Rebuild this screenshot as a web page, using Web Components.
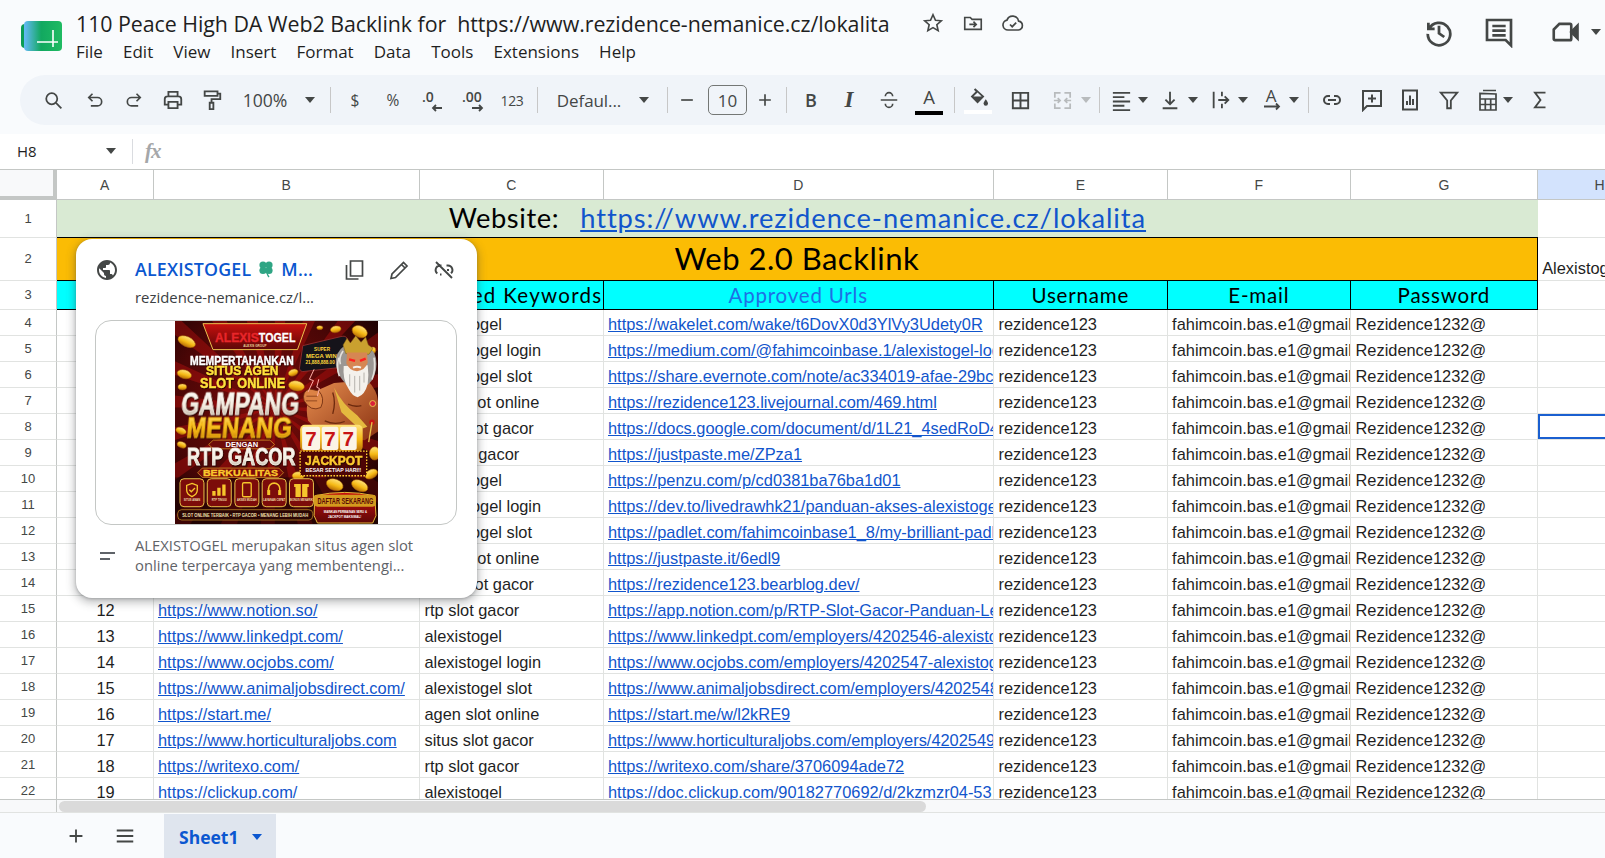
<!DOCTYPE html>
<html lang="en">
<head>
<meta charset="utf-8">
<title>110 Peace High DA Web2 Backlink</title>
<style>
  html, body { margin: 0; height: 858px; overflow: hidden; background: #f9fbfd; }
</style>
</head>
<body>
<sheet-app></sheet-app>
<script>
const UI_FONT = '"Open Sans", "Liberation Sans", sans-serif';
const CELL_FONT = '"Liberation Sans", Arial, sans-serif';
const HEAD_FONT = 'Lato, "Open Sans", sans-serif';

// stroke icon on a 24 unit box
function icon(d, size = 22, width = 2, color = '#444746') {
  return `<svg width="${size}" height="${size}" viewBox="0 0 24 24" fill="none" stroke="${color}" stroke-width="${width}" style="display:block">${d}</svg>`;
}
const p = (d) => `<path d="${d}"/>`;
const caret = (color = '#444746') => `<svg width="12" height="7" viewBox="0 0 12 7" style="display:block"><path d="M1 0h10L6 6z" fill="${color}"/></svg>`;

class DocHeader extends HTMLElement {
  constructor() {
    super();
    this.attachShadow({ mode: 'open' });
    const menus = ['File', 'Edit', 'View', 'Insert', 'Format', 'Data', 'Tools', 'Extensions', 'Help'];
    this.shadowRoot.innerHTML = `
      <style>
        :host { display: flex; height: 75px; font-family: ${UI_FONT}; color: #1f1f1f; }
        .logo { margin: 21px 14px 0 21px; width: 41px; height: 30px; flex: none; }
        .main { flex: none; width: 1010px; }
        .title { display: flex; align-items: center; height: 34px; margin-top: 6px; }
        .title span { font-size: 21.4px; letter-spacing: -0.06px; white-space: pre; width: 837px; flex: none; }
        .title i { width: 40px; flex: none; display: flex; justify-content: center; }
        .menu { display: flex; gap: 20.1px; font-size: 17px; height: 24px; align-items: center; margin-top: -1px; }
        .right { display: flex; align-items: center; margin-left: 338px; height: 64px; flex: none; }
        .right b { display: block; font-weight: normal; }
      </style>
      <svg class="logo" viewBox="0 0 41 30">
        <defs><linearGradient id="g" x1="0" x2="1"><stop offset="0.02" stop-color="#62b9f2"/><stop offset="0.45" stop-color="#12a860"/><stop offset="1" stop-color="#1fbb62"/></linearGradient></defs>
        <rect x="0" y="3" width="10" height="24" rx="4" fill="#0b9c55"/>
        <rect x="3" y="0" width="38" height="30" rx="4" fill="url(#g)"/>
        <path d="M16 21h21M32 9v17" stroke="#fff" stroke-width="1.6" fill="none"/>
      </svg>
      <div class="main">
        <div class="title">
          <span>110 Peace High DA Web2 Backlink for  https://www.rezidence-nemanice.cz/lokalita</span>
          <i>${icon('<path d="M12 3l2.7 6 6.3.6-4.8 4.3 1.4 6.4L12 17l-5.6 3.3 1.4-6.4L3 9.6 9.3 9z"/>', 22, 1.8)}</i>
          <i>${icon(p('M3 6h6l2 2h10v11H3z M8 13.5h7 M12.5 10.5l3 3-3 3'), 22, 1.8)}</i>
          <i>${icon(p('M7 19a5 5 0 0 1-1-9.9 6 6 0 0 1 11.6 1A4.5 4.5 0 0 1 17.5 19z M9 13.5l2.2 2.2 4-4'), 24, 1.7)}</i>
        </div>
        <div class="menu">${menus.map((m) => `<span>${m}</span>`).join('')}</div>
      </div>
      <div class="right">
        <b>${icon(p('M3.5 4.5v5h5 M4 9.5a9 9 0 1 1-1 4 M12 7v6l4.2 3'), 30, 2.2)}</b>
        <b style="margin-left:29px">${icon(p('M3 3h18v19l-4-4H3z M7 7.5h10 M7 11h10 M7 14.5h10'), 32, 2)}</b>
        <b style="margin-left:35px">${icon('<path d="M3 10l4.5-4.5H16a1 1 0 0 1 1 1v11a1 1 0 0 1-1 1H4a1 1 0 0 1-1-1z"/><path d="M17 12l5-5v10z" fill="#444746"/>', 30, 2.1)}</b>
        <b style="margin-left:10px">${caret()}</b>
      </div>
    `;
  }
}
customElements.define('doc-header', DocHeader);

class ToolBtn extends HTMLElement {
  constructor() {
    super();
    this.attachShadow({ mode: 'open' });
    this.shadowRoot.innerHTML = `
      <style>
        :host { display: flex; flex: none; align-items: center; justify-content: center; height: 50px; white-space: nowrap; color: #444746; }
      </style>
      <slot></slot>
    `;
  }
}
customElements.define('tool-btn', ToolBtn);

class SheetToolbar extends HTMLElement {
  constructor() {
    super();
    this.attachShadow({ mode: 'open' });
    const t = (s, size, w = '') => `<span style="font-size:${size}px;${w}">${s}</span>`;
    const sep = [1, '<div class="sep"></div>'];
    const gray = '#b8bbbd';
    // centre x in the window, width, content
    const items = [
      [53.5, 24, icon('<circle cx="10" cy="10" r="6.3"/>' + p('M14.8 14.8L21 21'), 21)],
      [95, 24, icon(p('M9 4.5L4.5 9 9 13.5 M4.5 9H15a5 5 0 0 1 0 10H7'), 20)],
      [134, 24, icon(p('M15 4.5L19.5 9 15 13.5 M19.5 9H9a5 5 0 0 0 0 10h8'), 20)],
      [172.5, 24, icon(p('M7 8V3.2h10V8 M6.5 17H3v-6a3 3 0 0 1 3-3h12a3 3 0 0 1 3 3v6h-3.5 M7 14h10v6.8H7z'), 22)],
      [212, 24, icon(p('M4 2.5h14v5H4z M18 5h3v6H11.5v3.5 M9.5 15h4v7h-4z'), 22)],
      [265, 50, t('100%', 17.6)],
      [310, 14, caret()],
      [330.5, ...sep],
      [355, 14, t('$', 15.5)],
      [393, 18, t('%', 15.5)],
      [431, 28, `<svg width="28" height="28" viewBox="0 0 28 28" overflow="visible" style="display:block" fill="#444746"><text x="5" y="16" font-size="14" font-weight="600" font-family='${UI_FONT}'>.0</text><path d="M25 22H16 M19 19l-3 3 3 3" stroke="#444746" stroke-width="1.8" fill="none"/></svg>`],
      [472, 30, `<svg width="30" height="28" viewBox="0 0 30 28" overflow="visible" style="display:block" fill="#444746"><text x="5" y="16" font-size="14" font-weight="600" font-family='${UI_FONT}'>.00</text><path d="M15 22h10 M22 19l3 3-3 3" stroke="#444746" stroke-width="1.8" fill="none"/></svg>`],
      [512, 30, t('123', 14, 'letter-spacing:-.4px')],
      [537, ...sep],
      [589, 68, t('Defaul...', 17, 'letter-spacing:-.1px')],
      [644, 14, caret()],
      [667, ...sep],
      [687, 20, icon(p('M5 12h14'), 22)],
      [727.5, 40, '<div class="size">10</div>'],
      [765, 20, icon(p('M5 12h14 M12 5v14'), 22)],
      [786, ...sep],
      [811, 16, `<b style="font-size:18px;font-weight:600;font-family:${UI_FONT}">B</b>`],
      [849, 16, `<i style="font-size:23px;font-weight:700;font-family:'Liberation Serif',serif;">I</i>`],
      [889, 24, icon('<path d="M3 12h18 M8 8a4 4 0 0 1 8 0 M8 16a4 4 0 0 0 8 0"/>', 22, 1.8)],
      [929, 28, '<div class="color"><span>A</span><em style="background:#000"></em></div>'],
      [954.5, ...sep],
      [978, 28, `<div class="color"><svg width="22" height="22" viewBox="0 0 24 24" style="display:block"><path d="M9 2l-1.5 1.5 2 2-5.5 5.5 7.5 7.5 7.5-7.5z M7 11l4.5-4.5 4.5 4.5z" fill="#444746" fill-rule="evenodd"/><path d="M20.5 14s-2.4 3-2.4 4.6a2.4 2.4 0 0 0 4.8 0c0-1.6-2.4-4.6-2.4-4.6z" fill="#444746"/></svg><em style="background:#fff"></em></div>`],
      [1020, 24, icon(p('M4 4h16v16H4z M12 4v16 M4 12h16'), 23)],
      [1062, 24, icon(p('M4 9V4h6 M14 4h6v5 M4 15v5h6 M14 20h6v-5 M3 12h6 M7 9.5L9.5 12 7 14.5 M21 12h-6 M17 9.5L14.5 12 17 14.5'), 23, 1.8, gray)],
      [1086, 14, caret(gray)],
      [1099, ...sep],
      [1121, 24, icon(p('M3 4h18 M3 8.5h12 M3 13h18 M3 17.5h12 M3 22h18'), 23)],
      [1143, 14, caret()],
      [1170, 24, icon(p('M12 3v13 M7 11.5l5 5 5-5 M4 21h16'), 22)],
      [1193, 14, caret()],
      [1221, 24, icon(p('M4 3v18 M13 3v5 M13 16v5 M9 12h11 M16 8l4 4-4 4'), 22)],
      [1243, 14, caret()],
      [1272, 24, `<svg width="24" height="26" viewBox="0 0 24 26" overflow="visible" style="display:block"><text x="11" y="15" text-anchor="middle" font-size="17" font-family='${UI_FONT}' fill="#444746">A</text><path d="M4 19.5h15 M16 16.5l3 3-3 3" fill="none" stroke="#444746" stroke-width="1.8"/></svg>`],
      [1294, 14, caret()],
      [1308, ...sep],
      [1332, 24, icon(p('M10 8H8a4 4 0 0 0 0 8h2 M14 8h2a4 4 0 0 1 0 8h-2 M8 12h8'), 24)],
      [1372, 24, icon(p('M3 3h18v15H7l-4 4z M12 6.5v8 M8 10.5h8'), 24)],
      [1410, 24, icon(p('M5 2.5h14v19H5z M9 17v-4 M12 17V7.5 M15 17v-6'), 24)],
      [1449, 24, icon(p('M3 4h18l-7 8.5V21h-4v-8.5z'), 22)],
      [1488, 24, icon(p('M7 2.5h13 M4 5.5v16.5h16V6z M4 11h16 M9.3 11v11 M14.7 11v11 M4 16.5h16'), 24, 1.7)],
      [1508, 14, caret()],
      [1540, 24, icon(p('M18 4H6.5l6 8-6 8H18'), 22)],
    ];
    let right = 20;
    const html = items.map(([c, w, body]) => {
      const left = c - w / 2;
      const gap = left - right;
      right = left + w;
      return `<tool-btn style="width:${w}px;margin-left:${gap}px">${body}</tool-btn>`;
    }).join('');
    this.shadowRoot.innerHTML = `
      <style>
        :host { display: flex; height: 50px; margin-left: 20px; background: #f0f4f9; border-radius: 25px 0 0 25px; font-family: ${UI_FONT}; align-items: center; }
        .sep { width: 1px; height: 26px; background: #c7c7c7; }
        .size { width: 39px; height: 30px; box-sizing: border-box; border: 1px solid #747775; border-radius: 5px; display: flex; align-items: center; justify-content: center; font-size: 17px; color: #444746; }
        .color { display: flex; flex-direction: column; align-items: center; width: 28px; }
        .color span { font-size: 18.5px; line-height: 22px; color: #444746; height: 25px; }
        .color svg { height: 25px; margin-top: -1px; }
        em { display: block; width: 28px; height: 4px; }
      </style>
      ${html}
    `;
  }
}
customElements.define('sheet-toolbar', SheetToolbar);

class FormulaBar extends HTMLElement {
  constructor() {
    super();
    this.attachShadow({ mode: 'open' });
    this.shadowRoot.innerHTML = `
      <style>
        :host { display: flex; height: 35px; margin-top: 9px; background: #fff; align-items: center; font-family: ${UI_FONT}; color: #1f1f1f; }
        .name { font-size: 15px; margin: -2px 0 0 17px; width: 88px; }
        .sep { width: 1px; height: 25px; background: #dadce0; margin-left: 15px; }
        .fx { font-family: "Liberation Serif", serif; font-style: italic; font-size: 21px; color: #a5a7a9; margin-left: 12px; font-weight: 700; letter-spacing: -1px; }
      </style>
      <span class="name">H8</span>${caret()}<span class="sep"></span><span class="fx">fx</span>
    `;
  }
}
customElements.define('formula-bar', FormulaBar);

class PromoArt extends HTMLElement {
  constructor() {
    super();
    this.attachShadow({ mode: 'open' });
    const coins = [[35, 62, 28, 15, 25], [28, 160, 22, 13, 15], [22, 198, 13, 9, 0], [365, 195, 24, 15, 10], [355, 155, 15, 10, -20], [18, 330, 16, 10, 20], [20, 372, 14, 9, 20], [370, 465, 18, 12, 0], [600, 398, 16, 20, 0], [590, 460, 20, 13, -30], [480, 492, 26, 17, 20], [555, 495, 26, 16, 25], [483, 25, 16, 10, -10], [555, 32, 24, 17, 25], [595, 88, 8, 10, 0], [435, 20, 9, 6, 0]];
    const tiles = [15, 97, 180, 262, 344];
    const rays = [];
    for (let a = 0; a < 360; a += 18) {
      const r = a * Math.PI / 180;
      rays.push(`<path d="M300 260L${300 + 500 * Math.cos(r)} ${260 + 500 * Math.sin(r)}L${300 + 500 * Math.cos(r + .12)} ${260 + 500 * Math.sin(r + .12)}z" fill="#c8120f" opacity=".38"/>`);
    }
    const txt = (s, x, y, w, size, fill, extra = '') => `<text x="${x}" y="${y}" textLength="${w}" lengthAdjust="spacingAndGlyphs" font-size="${size}" font-weight="900" fill="${fill}" font-family='"Liberation Sans",sans-serif' ${extra}>${s}</text>`;
    const fat = (color, n = 2.5) => `stroke="${color}" stroke-width="${n}" class="sh"`;
    this.shadowRoot.innerHTML = `
      <style>
        :host { display: block; width: 203px; height: 203px; flex: none; }
        svg { display: block; width: 100%; height: 100%; }
        .sh { filter: drop-shadow(2px 3px 1px rgba(30,5,0,.85)); }
      </style>
      <svg viewBox="0 0 610 610">
        <defs>
          <radialGradient id="bg" cx=".45" cy=".42" r=".7"><stop offset="0" stop-color="#7c0c0a"/><stop offset=".65" stop-color="#4a0606"/><stop offset="1" stop-color="#1c0303"/></radialGradient>
          <linearGradient id="gold" x1="0" x2="0" y1="0" y2="1"><stop offset="0" stop-color="#ffe27a"/><stop offset=".55" stop-color="#f5b915"/><stop offset="1" stop-color="#b86d06"/></linearGradient>
          <linearGradient id="white" x1="0" x2="0" y1="0" y2="1"><stop offset="0" stop-color="#fff"/><stop offset=".6" stop-color="#f3ece0"/><stop offset="1" stop-color="#a89a88"/></linearGradient>
          <linearGradient id="skin" x1="0" x2="1" y1="0" y2="1"><stop offset="0" stop-color="#e88f50"/><stop offset="1" stop-color="#8a3212"/></linearGradient>
          <linearGradient id="band" x1="0" x2="0" y1="0" y2="1"><stop offset="0" stop-color="#c8100e"/><stop offset="1" stop-color="#5d0707"/></linearGradient>
        </defs>
        <rect width="610" height="610" fill="url(#bg)"/>
        ${rays.join('')}
        <rect x="0" y="470" width="610" height="140" fill="#220404" opacity=".55"/>
        <g fill="url(#gold)" stroke="#a65f05" stroke-width="1.5">${coins.map(([x, y, a, b, r]) => `<ellipse cx="${x}" cy="${y}" rx="${a}" ry="${b}" transform="rotate(${r} ${x} ${y})"/>`).join('')}</g>

        <path d="M84 8H396L368 86H114z" fill="url(#band)" stroke="#eec24e" stroke-width="3"/>
        ${txt('ALEXIS', 120, 62, 132, 40, '#e8262a', 'stroke="#e8262a" stroke-width="1"')}${txt('TOGEL', 252, 62, 110, 40, '#fff', 'stroke="#fff" stroke-width="1"')}
        ${txt('ALEXIS GROUP', 205, 78, 70, 9, '#e9d39a')}

        <!-- phone -->
        <path d="M384 74l118-28q14-2 16 10l-6 82-128 14q-10 0-10-10z" fill="#15131a" stroke="#8a2a2a" stroke-width="3"/>
        ${txt('SUPER', 418, 90, 48, 15, '#ffd83a')}${txt('MEGA WIN', 394, 110, 92, 18, '#ffd83a')}${txt('21,888,888.00', 392, 130, 88, 14, '#ffd83a')}

        <!-- the old god -->
        <path d="M400 300q-14-60 20-88l58-26 100-8q30 30 32 64v90l-40 26-130-16z" fill="url(#skin)"/>
        <path d="M474 215q10 30 0 64M520 250q20 10 40 4M450 300q30 14 60 2" fill="none" stroke="#6d2a0e" stroke-width="4"/>
        <path d="M388 240q-8-28 16-36l28 6q20 22 6 50-30 14-50-20z" fill="#dc8244" stroke="#6d2a0e" stroke-width="2.5"/>
        <path d="M395 226h32M393 240h34" stroke="#6d2a0e" stroke-width="2"/>
        <path d="M478 200q24 50 70 84l30 34-22 8-56-52z" fill="#e4b93f"/>
        <path d="M488 150q-14-40 10-66 26-26 62-18 36 10 44 46 6 36-12 66-20 26-46 26-38-6-58-54z" fill="#9b9794"/>
        <path d="M492 110q-8 30 2 56M598 110q6 34-6 66M505 90q-14 20-8 40" fill="none" stroke="#e4e1dc" stroke-width="5"/>
        <path d="M507 135q-4 40 14 68 12 24 28 26 22-8 30-40 4-26 0-56z" fill="#f4f1ec"/>
        <path d="M525 160v36M540 165v50M555 165v44M568 155v30" stroke="#a9a5a0" stroke-width="2.5"/>
        <path d="M505 72l12-20 10 14 16-22 16 20 14-16 8 24 14 10-12 18-70-2z" fill="#caa02f" stroke="#7c5a12" stroke-width="1.5"/>
        <path d="M517 95h60l2 30q-8 24-32 26-24-2-32-24z" fill="#d68653"/>
        <path d="M523 115l18 5M573 113l-17 7" stroke="#ff1f1f" stroke-width="7"/>
        <path d="M535 140q12-5 24 0" stroke="#f4f1ec" stroke-width="6" fill="none"/>
        <circle cx="594" cy="248" r="9" fill="#d9213a" stroke="#e8c14a" stroke-width="3"/>
        <path d="M418 145l-14 30 12 4-16 34M432 175l-6 24 8 4-6 22" fill="none" stroke="#ffb0a8" stroke-width="3"/>

        <rect x="376" y="312" width="188" height="80" rx="14" fill="url(#gold)"/>
        <g fill="#fbf4e6"><rect x="382" y="318" width="54" height="70" rx="6"/><rect x="441" y="318" width="50" height="70" rx="6"/><rect x="496" y="318" width="50" height="70" rx="6"/></g>
        <g font-size="62" font-weight="900" fill="#c71414" font-family='"Liberation Sans",sans-serif' text-anchor="middle"><text x="409" y="376">7</text><text x="466" y="376">7</text><text x="521" y="376">7</text></g>
        <circle cx="592" cy="304" r="8" fill="#c71414"/><path d="M592 304l-10 60" stroke="#e8c14a" stroke-width="4"/>

        <rect x="376" y="391" width="200" height="74" fill="#4d0505" stroke="#ffcf33" stroke-width="4" stroke-dasharray="5 4"/>
        ${txt('JACKPOT', 391, 432, 172, 36, '#fdc92f', fat('#fdc92f', 1.5))}${txt('BESAR SETIAP HARI!!', 392, 455, 168, 15, '#fff')}

        ${txt('MEMPERTAHANKAN', 45, 132, 312, 41, '#fff', fat('#fff', 1.5))}
        ${txt('SITUS AGEN', 93, 161, 218, 39, '#ffe23c', fat('#ffe23c', 1.5))}
        ${txt('SLOT ONLINE', 75, 200, 256, 45, '#ffe23c', fat('#ffe23c', 1.5))}
        ${txt('GAMPANG', 17, 280, 354, 92, 'url(#white)', 'transform="skewX(-5) translate(24 0)" ' + fat('#f3ece0', 3))}
        ${txt('MENANG', 35, 351, 316, 90, 'url(#gold)', 'transform="skewX(-5) translate(28 0)" ' + fat('#f5b915', 3))}
        <path d="M115 358h170l14 13-14 13H115l-14-13z" fill="#6d0b0a" stroke="#e2a92c" stroke-width="2"/>
        ${txt('DENGAN', 152, 378, 98, 20, '#fff')}
        ${txt('RTP GACOR', 36, 434, 326, 72, 'url(#white)', fat('#f3ece0', 3))}
        <path d="M82 442h230l14 14-14 14H82l-14-14z" fill="#7a0b09" stroke="#e2a92c" stroke-width="2"/>
        ${txt('BERKUALITAS', 84, 466, 226, 27, '#fcc92d', 'stroke="#fcc92d" stroke-width="1"')}

        ${tiles.map((x) => `<rect x="${x}" y="474" width="72" height="84" rx="12" fill="#7c0c0a" stroke="#e8c14a" stroke-width="3"/>`).join('')}
        <path d="M51 488l16 6v14q0 13-16 20-16-7-16-20v-14z" fill="none" stroke="#f6c52c" stroke-width="4"/><path d="M43 507l6 6 11-11" fill="none" stroke="#f6c52c" stroke-width="4"/>
        <path d="M112 525h10v-14h-10z M127 525h10v-24h-10z M142 525h10v-34h-10z" fill="#f6c52c"/>
        <rect x="203" y="486" width="26" height="42" rx="4" fill="none" stroke="#f6c52c" stroke-width="4"/>
        <path d="M281 510v-6a17 17 0 0 1 34 0v6" fill="none" stroke="#f6c52c" stroke-width="5"/><rect x="277" y="508" width="9" height="15" fill="#f6c52c"/><rect x="310" y="508" width="9" height="15" fill="#f6c52c"/>
        <path d="M362 499h36v30h-36z M358 490h44v9h-44z" fill="#f6c52c"/><path d="M380 490v39" stroke="#7c0c0a" stroke-width="4"/>
        <g font-size="8" font-weight="700" fill="#f2dfb0" font-family='"Liberation Sans",sans-serif' text-anchor="middle">
          <text x="51" y="541">SITUS AMAN</text><text x="133" y="541">RTP TINGGI</text><text x="216" y="541">AKSES MUDAH</text><text x="298" y="541">LAYANAN CEPAT</text><text x="380" y="541">BONUS MENARIK</text>
        </g>
        <rect x="8" y="567" width="406" height="31" rx="12" fill="#2a0605" stroke="#d19a2a" stroke-width="2"/>
        ${txt('SLOT ONLINE TERBAIK • RTP GACOR • MENANG LEBIH MUDAH', 22, 589, 378, 16, '#f5e3b0')}
        <path d="M420 525q90-20 180 0l4 60-10 22H428l-10-22z" fill="url(#band)" stroke="#e8b838" stroke-width="3"/>
        <rect x="418" y="522" width="186" height="36" rx="10" fill="#d49a1e"/>
        ${txt('DAFTAR SEKARANG', 428, 551, 168, 26, '#5a0a05')}
        ${txt('MAINKAN PERMAINAN SERU &amp;', 447, 576, 130, 11, '#fff')}
        ${txt('JACKPOT MAKSIMAL!', 460, 592, 100, 11, '#fff')}
      </svg>
    `;
  }
}
customElements.define('promo-art', PromoArt);

class LinkPreview extends HTMLElement {
  constructor() {
    super();
    this.attachShadow({ mode: 'open' });
    this.shadowRoot.innerHTML = `
      <style>
        :host { position: absolute; left: 76px; top: 69px; width: 401px; height: 359px; box-sizing: border-box; background: #fff; border-radius: 16px; box-shadow: 0 3px 8px 2px rgba(60,64,67,.3), 0 1px 3px rgba(60,64,67,.3); padding: 18px 19px 0; font-family: ${UI_FONT}; z-index: 5; }
        .top { display: flex; align-items: flex-start; height: 63px; }
        .globe { width: 24px; margin-right: 16px; margin-top: 1px; flex: none; }
        .titles { width: 196px; flex: none; }
        .name { display: flex; align-items: center; font-size: 17.8px; font-weight: 600; color: #0b57d0; height: 24px; white-space: nowrap; letter-spacing: .2px; }
        .name svg { margin: 0 7px; flex: none; }
        .url { font-size: 14.9px; color: #3c4043; margin-top: 6px; white-space: nowrap; }
        .acts { display: flex; margin-left: 11px; margin-top: 1px; gap: 21px; }
        .shot { width: 362px; height: 205px; box-sizing: border-box; border: 1px solid #c4c7c5; border-radius: 16px; display: flex; justify-content: center; overflow: hidden; }
        .desc { display: flex; align-items: center; margin-top: 10px; }
        .desc svg { margin: 0 20px 0 5px; flex: none; position: relative; top: 1px; }
        .desc p { margin: 0; font-size: 14.8px; line-height: 20px; color: #5f6368; white-space: nowrap; }
      </style>
      <div class="top">
        <div class="globe"><svg width="24" height="24" viewBox="0 0 24 24" style="display:block"><path fill="#444746" d="M12 2C6.48 2 2 6.48 2 12s4.48 10 10 10 10-4.48 10-10S17.52 2 12 2zm-1 17.93c-3.95-.49-7-3.85-7-7.93 0-.62.08-1.21.21-1.79L9 15v1c0 1.1.9 2 2 2v1.93zm6.9-2.54c-.26-.81-1-1.39-1.9-1.39h-1v-3c0-.55-.45-1-1-1H8v-2h2c.55 0 1-.45 1-1V7h2c1.1 0 2-.9 2-2v-.41c2.93 1.19 5 4.06 5 7.41 0 2.08-.8 3.97-2.1 5.39z"/></svg></div>
        <div class="titles">
          <div class="name"><span>ALEXISTOGEL</span><svg width="16" height="18" viewBox="0 0 16 18"><g fill="#2fa584"><circle cx="5" cy="5" r="3.6"/><circle cx="11" cy="5" r="3.6"/><circle cx="5" cy="10.5" r="3.6"/><circle cx="11" cy="10.5" r="3.6"/></g><path d="M8 8q.5 6 3 9" stroke="#2fa584" stroke-width="1.4" fill="none"/></svg><span>M...</span></div>
          <div class="url">rezidence-nemanice.cz/l...</div>
        </div>
        <div class="acts">
          ${icon(p('M8.5 3h12v15h-12z M4.5 7v14h12'), 24, 1.7)}
          ${icon(p('M4 20.5l1-4.5L16.5 4.5l3.5 3.5L8.5 19.5z M14.5 6.5L18 10'), 24, 1.7)}
          ${icon(p('M9.5 7.5H8a4.5 4.5 0 0 0-2.7 8 M9.5 16.5H8 M14.5 7.5H16a4.5 4.5 0 0 1 3 7.8 M15 12h2 M4 4l16 16'), 24, 1.9)}
        </div>
      </div>
      <div class="shot"><promo-art></promo-art></div>
      <div class="desc">
        <svg width="15" height="8" viewBox="0 0 15 8"><path d="M0 1h15M0 7h10" stroke="#5f6368" stroke-width="2"/></svg>
        <p>ALEXISTOGEL merupakan situs agen slot<br>online terpercaya yang membentengi...</p>
      </div>
    `;
  }
}
customElements.define('link-preview', LinkPreview);

const KEYWORDS = ['alexistogel', 'alexistogel login', 'alexistogel slot', 'agen slot online', 'situs slot gacor', 'rtp slot gacor'];
const ROWS = [
  ['', 'https://wakelet.com/wake/t6DovX0d3YlVy3Udety0R'],
  ['', 'https://medium.com/@fahimcoinbase.1/alexistogel-login'],
  ['', 'https://share.evernote.com/note/ac334019-afae-29bc'],
  ['', 'https://rezidence123.livejournal.com/469.html'],
  ['', 'https://docs.google.com/document/d/1L21_4sedRoD4'],
  ['', 'https://justpaste.me/ZPza1'],
  ['', 'https://penzu.com/p/cd0381ba76ba1d01'],
  ['', 'https://dev.to/livedrawhk21/panduan-akses-alexistogel'],
  ['', 'https://padlet.com/fahimcoinbase1_8/my-brilliant-padlet'],
  ['', 'https://justpaste.it/6edl9'],
  ['', 'https://rezidence123.bearblog.dev/'],
  ['https://www.notion.so/', 'https://app.notion.com/p/RTP-Slot-Gacor-Panduan-Lengkap'],
  ['https://www.linkedpt.com/', 'https://www.linkedpt.com/employers/4202546-alexistogel'],
  ['https://www.ocjobs.com/', 'https://www.ocjobs.com/employers/4202547-alexistogel'],
  ['https://www.animaljobsdirect.com/', 'https://www.animaljobsdirect.com/employers/4202548'],
  ['https://start.me/', 'https://start.me/w/l2kRE9'],
  ['https://www.horticulturaljobs.com', 'https://www.horticulturaljobs.com/employers/4202549'],
  ['https://writexo.com/', 'https://writexo.com/share/3706094ade72'],
  ['https://clickup.com/', 'https://doc.clickup.com/90182770692/d/2kzmzr04-53'],
];

class SheetGrid extends HTMLElement {
  constructor() {
    super();
    this.attachShadow({ mode: 'open' });
    const letters = ['A', 'B', 'C', 'D', 'E', 'F', 'G', 'H'];
    let html = '<div class="corner"></div>';
    html += letters.map((l) => `<div class="col${l === 'H' ? ' on' : ''}">${l}</div>`).join('');
    html += `<div class="num">1</div><div class="merged site"><span>Website:</span><a>https://www.rezidence-nemanice.cz/lokalita</a></div><div class="c"></div>`;
    html += `<div class="num">2</div><div class="merged web">Web 2.0 Backlink</div><div class="c">Alexistogel</div>`;
    html += `<div class="num">3</div>` + ['', '', 'Targeted Keywords', 'Approved Urls', 'Username', 'E-mail', 'Password'].map((s, i) => `<div class="th${i === 3 ? ' blue' : ''}${i === 2 ? ' kw' : ''}">${s}</div>`).join('') + '<div class="c"></div>';
    ROWS.forEach(([site, url], i) => {
      const n = i + 4;
      const hasNumber = i >= 11;
      html += `<div class="num">${n}</div>`;
      html += `<div class="c ctr">${hasNumber ? i + 1 : ''}</div>`;
      html += `<div class="c">${site ? `<a>${site}</a>` : ''}</div>`;
      html += `<div class="c">${KEYWORDS[i % 6]}</div>`;
      html += `<div class="c"><a>${url}</a></div>`;
      html += `<div class="c">rezidence123</div><div class="c">fahimcoin.bas.e1@gmail.com</div><div class="c">Rezidence1232@</div>`;
      html += `<div class="c${n === 8 ? ' sel' : ''}"></div>`;
    });
    this.shadowRoot.innerHTML = `
      <style>
        :host { display: block; position: relative; height: 630px; background: #fff; overflow: hidden; border-top: 1px solid #c4c7c5; box-sizing: border-box; }
        .grid { display: grid; grid-template-columns: 57px 96.5px 266.5px 183.5px 390.5px 173.6px 183.4px 186.7px 125px; grid-template-rows: 30px 38px 42.5px 29.5px repeat(19, 26px); height: 630px; align-content: start; }
        .corner { background: #f8f9fa; border-right: 4px solid #c4c7c5; border-bottom: 4px solid #c4c7c5; box-sizing: border-box; }
        .col { display: flex; align-items: center; justify-content: center; font: 14px ${CELL_FONT}; color: #444746; border-right: 1px solid #c4c7c5; border-bottom: 1px solid #c4c7c5; box-sizing: border-box; }
        .col.on { background: #d3e3fd; }
        .num { display: flex; align-items: center; justify-content: center; font: 13px ${CELL_FONT}; color: #444746; border-right: 1px solid #c4c7c5; border-bottom: 1px solid #e1e3e1; box-sizing: border-box; background: #fff; padding-bottom: 1px; }
        .c { display: flex; align-items: flex-end; padding: 0 3px 1.5px 4.5px; box-sizing: border-box; border-right: 1px solid #e1e3e1; border-bottom: 1px solid #e1e3e1; font: 16.4px/19px ${CELL_FONT}; color: #1f1f1f; white-space: nowrap; overflow: hidden; min-width: 0; }
        .c.ctr { justify-content: center; }
        a { color: #1155cc; text-decoration: underline; }
        .merged { grid-column: span 7; display: flex; align-items: center; justify-content: center; font-family: ${HEAD_FONT}; color: #000; white-space: nowrap; box-sizing: border-box; padding-bottom: 2px; }
        .site { background: #d9ead3; font-size: 27.3px; gap: 21px; border-bottom: 1px solid #000; letter-spacing: .6px; }
        .site a { color: #1155cc; letter-spacing: .93px; }
        .web { background: #fbbc04; font-size: 31px; border-bottom: 1px solid #000; border-right: 1px solid #000; letter-spacing: .5px; }
        .th { background: #00ffff; display: flex; align-items: center; justify-content: center; font: 20.5px ${HEAD_FONT}; color: #000; border-right: 1px solid #000; border-bottom: 1px solid #000; box-sizing: border-box; white-space: nowrap; min-width: 0; letter-spacing: .8px; }
        .th.kw { justify-content: flex-end; letter-spacing: 1.3px; }
        .th.blue { color: #1f6fe5; }
        .sel { box-shadow: inset 0 0 0 2px #1a5fd0; }
      </style>
      <div class="grid">${html}</div>
      <link-preview></link-preview>
    `;
  }
}
customElements.define('sheet-grid', SheetGrid);

class SheetTabs extends HTMLElement {
  constructor() {
    super();
    this.attachShadow({ mode: 'open' });
    this.shadowRoot.innerHTML = `
      <style>
        :host { display: block; font-family: ${UI_FONT}; }
        .bar { display: flex; height: 14px; background: #f8f9fa; border-top: 1px solid #c4c7c5; border-bottom: 1px solid #e1e3e1; box-sizing: border-box; }
        .stub { width: 57px; border-right: 1px solid #c4c7c5; box-sizing: border-box; }
        .thumb { width: 867px; height: 11px; border-radius: 6px; background: #dadada; margin: 1px 0 0 2px; }
        .tabs { display: flex; height: 45px; align-items: center; background: #f9fbfd; }
        .plus { margin-left: 65px; }
        .tab { display: flex; align-items: center; width: 112px; height: 44px; background: #dfe5ee; box-sizing: border-box; padding: 2px 0 0 15px; color: #0b57d0; font-weight: 700; font-size: 17.5px; margin-top: 1px; }
        .tab svg { margin-left: 13px; }
      </style>
      <div class="bar"><div class="stub"></div><div class="thumb"></div></div>
      <div class="tabs">
        <span class="plus">${icon(p('M5 12h14 M12 5v14'), 22)}</span>
        <span style="margin-left:27px">${icon(p('M3 6h18 M3 12h18 M3 18h18'), 22)}</span>
        <div class="tab" style="margin-left:28px">Sheet1${caret('#0b57d0')}</div>
      </div>
    `;
  }
}
customElements.define('sheet-tabs', SheetTabs);

class SheetApp extends HTMLElement {
  constructor() {
    super();
    this.attachShadow({ mode: 'open' });
    this.shadowRoot.innerHTML = `
      <style>
        :host { display: flex; flex-direction: column; width: 1605px; height: 858px; overflow: hidden; }
      </style>
      <doc-header></doc-header>
      <sheet-toolbar></sheet-toolbar>
      <formula-bar></formula-bar>
      <sheet-grid></sheet-grid>
      <sheet-tabs></sheet-tabs>
    `;
  }
}
customElements.define('sheet-app', SheetApp);
</script>
</body>
</html>
